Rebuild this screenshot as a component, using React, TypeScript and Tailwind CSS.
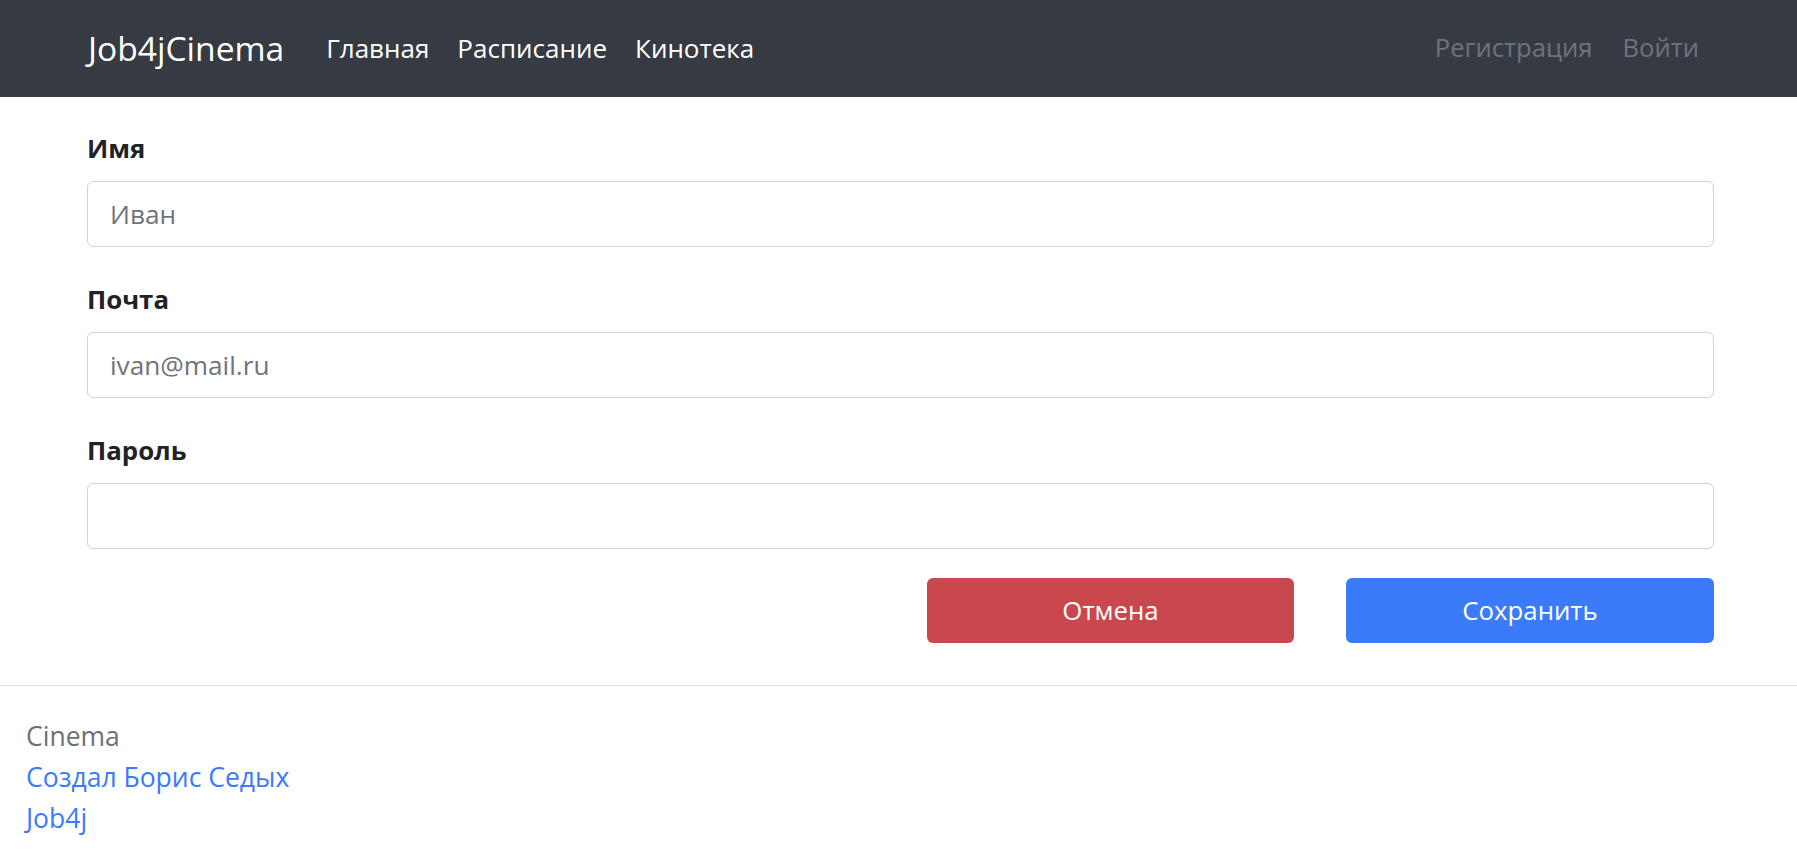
const font = { fontFamily: '"Open Sans", "Noto Sans", sans-serif' }

const Field = ({ label, placeholder, type = "text", last = false }: { label: string; placeholder?: string; type?: string; last?: boolean }) => {
  return (
    <div className={last ? "" : "mb-[33px]"}>
      <label className="block h-[38px] leading-[38px] mb-[14px] text-[25.8px] font-bold text-[#1f2226]">
        {label}
      </label>
      <input
        type={type}
        placeholder={placeholder}
        className="block w-full h-[66px] border border-[#d0d3d8] rounded-[6px] px-[22px] text-[26.2px] text-[#212529] placeholder:text-[#6f747a] outline-none bg-white"
      />
    </div>
  )
}

export const App = () => {
  return (
    <div style={font} className="min-h-screen bg-white">
      <nav className="h-[97px] bg-[#363a42] flex items-center pl-[88px] pr-[83px]">
        <span className="text-[33.6px] text-white mr-[42px]">Job4jCinema</span>
        <div className="flex items-center gap-[28px] text-[26px] text-white">
          <a>Главная</a>
          <a>Расписание</a>
          <a>Кинотека</a>
        </div>
        <div className="ml-auto flex items-center gap-[30px] pr-[15px] text-[25.6px] text-[#6e7479]">
          <a>Регистрация</a>
          <a>Войти</a>
        </div>
      </nav>

      <main className="pl-[87px] pr-[83px] pt-[32px]">
        <form>
          <Field label="Имя" placeholder="Иван" />
          <Field label="Почта" placeholder="ivan@mail.ru" type="email" />
          <Field label="Пароль" type="password" last />

          <div className="flex justify-end gap-[52px] mt-[29px]">
            <button type="button" className="w-[367px] h-[65px] rounded-[6px] bg-[#c9484e] text-white text-[25.8px]">
              Отмена
            </button>
            <button type="submit" className="w-[368px] h-[65px] rounded-[6px] bg-[#3b7bf9] text-white text-[25.8px]">
              Сохранить
            </button>
          </div>
        </form>
      </main>

      <footer className="mt-[42px] border-t border-[#dfe1e5] pt-[30px] pl-[26px] text-[26.5px] leading-[41px]">
        <div className="text-[#6c7176]">Cinema</div>
        <div><a className="text-[#3b7bf9]">Создал Борис Седых</a></div>
        <div><a className="text-[#3b7bf9]">Job4j</a></div>
      </footer>
    </div>
  )
}

export default App
